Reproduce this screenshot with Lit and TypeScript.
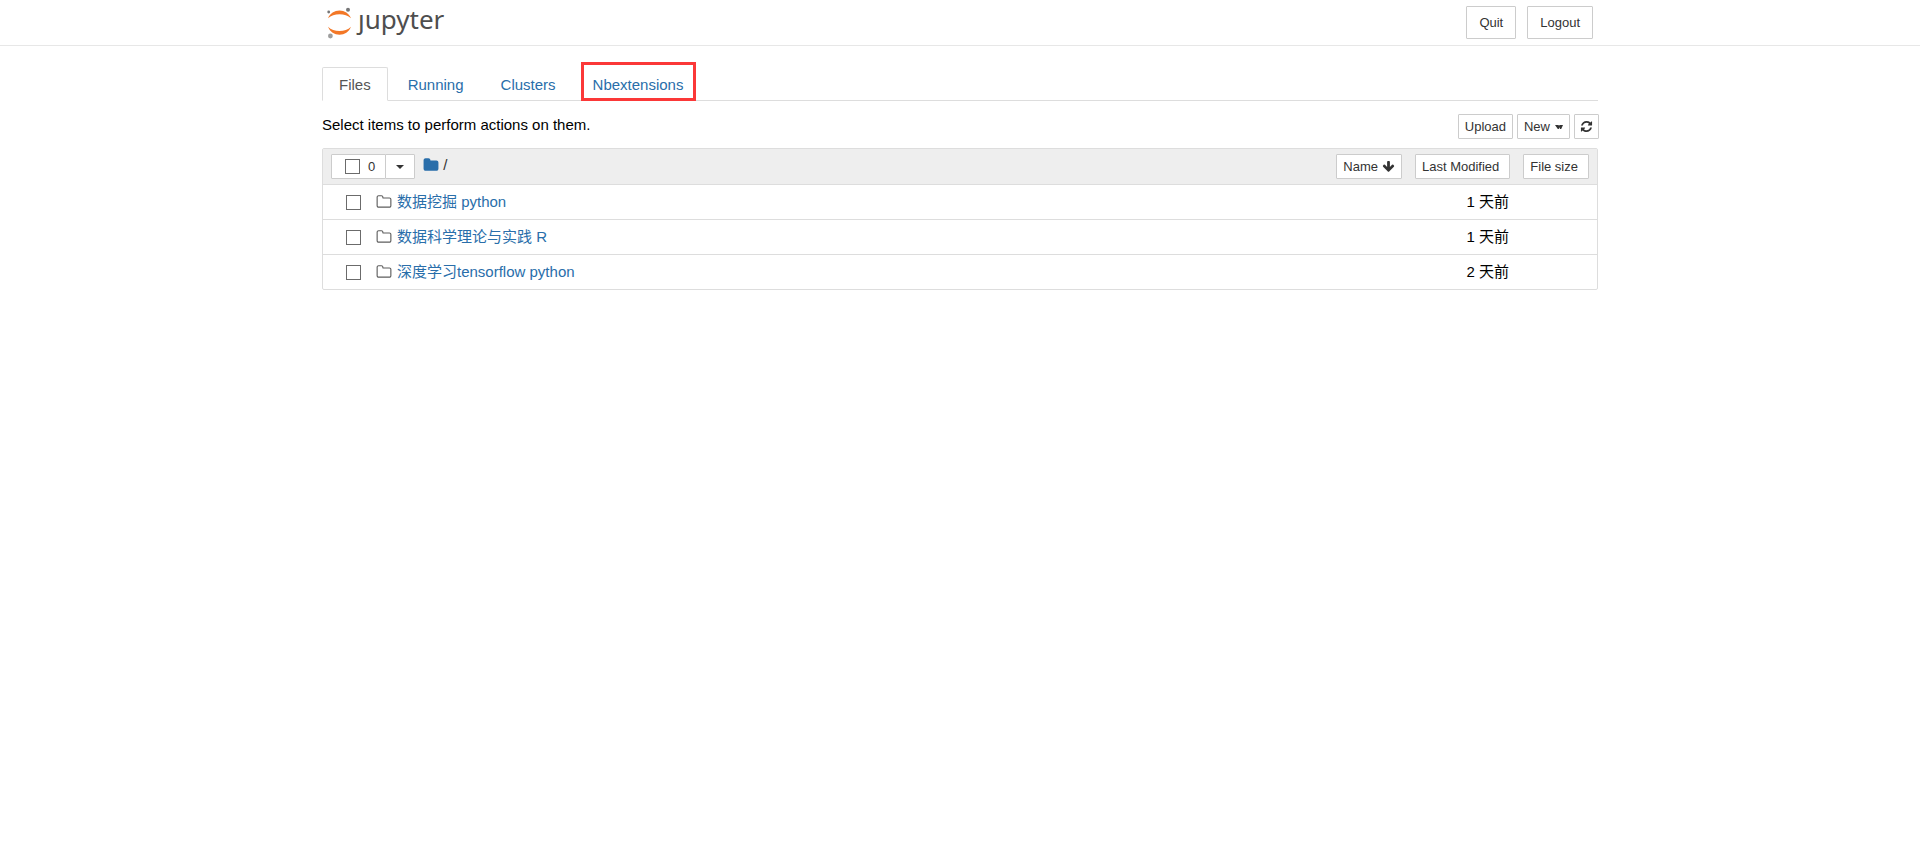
import { LitElement, html, css, svg } from "lit";
import { customElement, state } from "lit/decorators.js";

interface Entry {
  name: string;
  modified: string;
}

const glyph = (d: string, cls: string) => html`<svg
  class="icon ${cls}" viewBox="0 0 1792 1792" aria-hidden="true">${svg`<path d=${d} />`}</svg>`;

const FOLDER =
  "M1728 608v704q0 92-66 158t-158 66h-1216q-92 0-158-66t-66-158v-960q0-92 66-158t158-66h320q92 0 158 66t66 158v32h672q92 0 158 66t66 158z";
const FOLDER_OUTLINE =
  "M1600 1312v-704q0-40-28-68t-68-28h-704q-40 0-68-28t-28-68v-64q0-40-28-68t-68-28h-320q-40 0-68 28t-28 68v960q0 40 28 68t68 28h1216q40 0 68-28t28-68zm128-704v704q0 92-66 158t-158 66h-1216q-92 0-158-66t-66-158v-960q0-92 66-158t158-66h320q92 0 158 66t66 158v32h672q92 0 158 66t66 158z";
const ARROW_DOWN =
  "M1675 832q0 53-37 90l-651 652q-39 37-91 37-53 0-90-37l-651-652q-38-36-38-90 0-53 38-91l74-75q39-37 91-37 53 0 90 37l294 294v-704q0-52 38-90t90-38h128q52 0 90 38t38 90v704l294-294q37-37 90-37 52 0 91 37l75 75q37 39 37 91z";
const REFRESH =
  "M1639 1056q0 5-1 7-64 268-268 434.5t-478 166.5q-146 0-282.5-55t-243.5-157l-129 129q-19 19-45 19t-45-19-19-45v-448q0-26 19-45t45-19h448q26 0 45 19t19 45-19 45l-137 137q71 66 161 102t187 36q134 0 250-65t186-179q11-17 53-117 8-23 30-23h192q13 0 22.5 9.5t9.5 22.5zm25-800v448q0 26-19 45t-45 19h-448q-26 0-45-19t-19-45 19-45l138-138q-148-137-349-137-134 0-250 65t-186 179q-11 17-53 117-8 23-30 23h-199q-13 0-22.5-9.5t-9.5-22.5v-7q65-268 270-434.5t480-166.5q146 0 284 55.5t245 156.5l130-129q19-19 45-19t45 19 19 45z";

@customElement("app-root")
export class AppRoot extends LitElement {
  static styles = css`
    :host {
      display: block;
      color: #000;
      background: #fff;
      font: 15px/20px "Liberation Sans", Arial, "Noto Sans CJK SC", sans-serif;
    }
    * {
      box-sizing: border-box;
    }
    a {
      color: #296eaa;
      text-decoration: none;
    }
    .container {
      max-width: 1276px;
      margin: 0 auto;
    }
    .header {
      border-bottom: 1px solid #e7e7e7;
    }
    .bar {
      display: flex;
      align-items: center;
      gap: 11px;
      height: 45px;
      padding: 0 5px;
    }
    .logo {
      display: flex;
      align-items: center;
      gap: 7px;
      margin-right: auto;
      color: #4e4e4e;
    }
    .mark {
      width: 24px;
      height: 32px;
    }
    .word {
      margin-bottom: 8px;
      font: 26px/32px "Noto Sans", sans-serif;
    }
    .btn {
      display: inline-flex;
      align-items: center;
      justify-content: center;
      height: 25px;
      margin: 0;
      padding: 0 6px;
      border: 1px solid #ccc;
      border-radius: 1px;
      background: #fff;
      color: #333;
      font: 13px/20px "Liberation Sans", Arial, sans-serif;
    }
    .large {
      height: 33px;
      padding: 0 12px;
    }
    .tabs {
      display: flex;
      gap: 3px;
      margin: 21px auto 0;
      padding: 0;
      border-bottom: 1px solid #ddd;
      list-style: none;
    }
    .item {
      position: relative;
      margin-bottom: -1px;
    }
    .tab {
      display: block;
      padding: 7px 16px 5px;
      border: 1px solid transparent;
      border-radius: 2px 2px 0 0;
    }
    .active {
      border-color: #ddd #ddd #fff;
      background: #fff;
      color: #555;
    }
    .marked::after {
      content: "";
      position: absolute;
      inset: -5px 4px 0 5px;
      border: 3px solid #fb3838;
      pointer-events: none;
    }
    .toolbar {
      display: flex;
      align-items: center;
      gap: 4px;
      margin: 13px -1px 9px 0;
    }
    .hint {
      margin: 0 auto 4px 0;
    }
    .square {
      width: 25px;
      padding: 0;
    }
    .list {
      border: 1px solid #ddd;
      border-radius: 2px;
    }
    .head {
      display: flex;
      align-items: center;
      height: 35px;
      padding: 0 8px;
      background: #eee;
    }
    .group {
      display: flex;
    }
    .select {
      gap: 8px;
      padding: 0 10px 0 13px;
    }
    .drop {
      width: 30px;
      margin-left: -1px;
    }
    .check {
      appearance: none;
      width: 15px;
      height: 15px;
      margin: 0;
      border: 1px solid #6b6b6b;
      background: #fff;
    }
    .crumb {
      display: flex;
      align-items: center;
      gap: 4px;
      margin: 0 auto 4px 8px;
    }
    .slash {
      color: #333;
    }
    .sorts {
      display: flex;
      gap: 13px;
    }
    .sort {
      gap: 4px;
    }
    .spaced {
      padding-right: 10px;
    }
    .row {
      display: flex;
      align-items: center;
      height: 35px;
      padding: 0 88px 0 23px;
      border-top: 1px solid #ddd;
    }
    .link {
      display: flex;
      align-items: center;
      gap: 5px;
      margin: 0 auto 0 15px;
    }
    .icon {
      flex: none;
      width: 16px;
      height: 16px;
      fill: currentColor;
    }
    .outline {
      color: #5e5e5e;
    }
    .small {
      width: 13px;
      height: 13px;
    }
    .caret {
      width: 8px;
      height: 4px;
      fill: currentColor;
    }
    .trailing {
      margin-left: 5px;
    }
  `;

  @state() private entries: Entry[] = [
    { name: "数据挖掘 python", modified: "1 天前" },
    { name: "数据科学理论与实践 R", modified: "1 天前" },
    { name: "深度学习tensorflow python", modified: "2 天前" },
  ];

  private renderEntry(entry: Entry) {
    return html`
      <div class="row">
        <input class="check" type="checkbox" aria-label=${entry.name} />
        <a class="link" href="#">${glyph(FOLDER_OUTLINE, "outline")}<span>${entry.name}</span></a>
        <span>${entry.modified}</span>
      </div>
    `;
  }

  render() {
    return html`
      <header class="header">
        <div class="container bar">
          <a class="logo" href="#" aria-label="jupyter">
            <svg class="mark" viewBox="0 0 24 32" aria-hidden="true">
              <path fill="#f37726" d="M1 11.300C3 6.500 7.500 3.600 12.500 3.600S22 6.500 24 11.300C21 8.500 17 7.300 12.500 7.300S4 8.500 1 11.300z" />
              <path fill="#f37726" d="M1 19.700C3 24.800 7.500 27.700 12.500 27.700S22 24.800 24 19.700C21 22.700 17 24 12.500 24S4 22.700 1 19.700z" />
              <circle cx="21" cy="2.700" r="2" fill="#767677" />
              <circle cx="1.700" cy="5" r="1.400" fill="#767677" />
              <circle cx="3.400" cy="29" r="2.400" fill="#9e9e9e" />
            </svg>
            <span class="word">ȷupyter</span>
          </a>
          <button class="btn large">Quit</button>
          <button class="btn large">Logout</button>
        </div>
      </header>
      <main class="container">
        <ul class="tabs">
          <li class="item"><a class="tab active" href="#">Files</a></li>
          <li class="item"><a class="tab" href="#">Running</a></li>
          <li class="item"><a class="tab" href="#">Clusters</a></li>
          <li class="item marked"><a class="tab" href="#">Nbextensions</a></li>
        </ul>
        <div class="toolbar">
          <span class="hint">Select items to perform actions on them.</span>
          <button class="btn">Upload</button>
          <button class="btn">
            New<svg class="caret trailing" viewBox="0 0 8 4" aria-hidden="true">
              <path d="M0 0h3.600L4 1l.5-1H8L6.200 4H5L4.300 2.200 3.800 4H2.800z" />
            </svg>
          </button>
          <button class="btn square" aria-label="Refresh">${glyph(REFRESH, "small")}</button>
        </div>
        <section class="list">
          <div class="head">
            <div class="group">
              <label class="btn select"><input class="check" type="checkbox" /><span>0</span></label>
              <button class="btn drop" aria-label="Select">
                <svg class="caret" viewBox="0 0 8 4" aria-hidden="true"><path d="M0 0h8L4 4z" /></svg>
              </button>
            </div>
            <a class="crumb" href="#" aria-label="Home">${glyph(FOLDER, "root")}<span class="slash">/</span></a>
            <div class="sorts">
              <button class="btn sort">Name${glyph(ARROW_DOWN, "small")}</button>
              <button class="btn sort spaced">Last Modified</button>
              <button class="btn sort spaced">File size</button>
            </div>
          </div>
          ${this.entries.map((entry) => this.renderEntry(entry))}
        </section>
      </main>
    `;
  }
}
